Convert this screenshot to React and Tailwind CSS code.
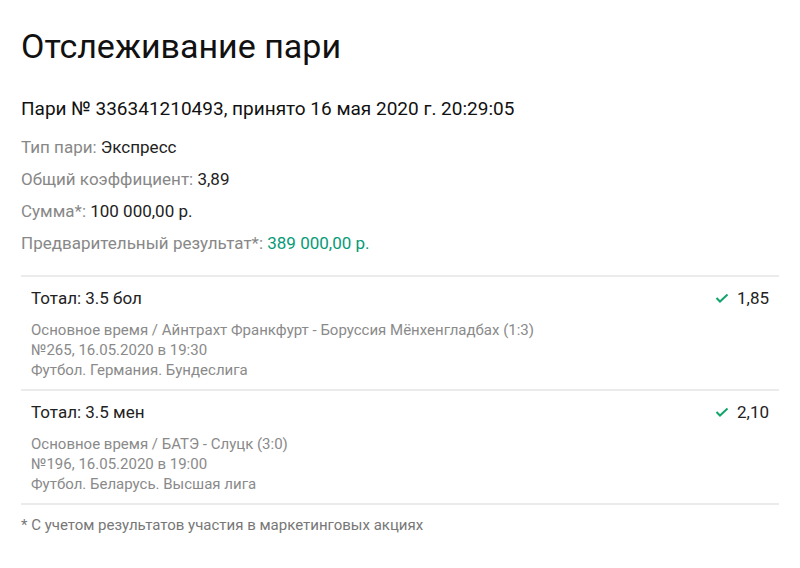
import React from 'react';

const bets = [
    {
        id: 1,
        name: 'Тотал: 3.5 бол',
        odds: '1,85',
        event: 'Основное время / Айнтрахт Франкфурт - Боруссия Мёнхенгладбах (1:3)',
        time: '№265, 16.05.2020 в 19:30',
        league: 'Футбол. Германия. Бундеслига',
    },
    {
        id: 2,
        name: 'Тотал: 3.5 мен',
        odds: '2,10',
        event: 'Основное время / БАТЭ - Слуцк (3:0)',
        time: '№196, 16.05.2020 в 19:00',
        league: 'Футбол. Беларусь. Высшая лига',
    },
];

function CheckIcon() {
    return (
        <svg width="14" height="10" viewBox="0 0 14 10" className="shrink-0">
            <polyline points="1.5,5 5,8.5 12.5,1.5" fill="none" stroke="#13a46c" strokeWidth="2" />
        </svg>
    );
}

function App() {
    return (
        <div className="bg-white min-h-[568px] px-[21px] text-[#222]" style={{ fontFamily: 'Roboto, "Liberation Sans", sans-serif' }}>
            <h1 className="pt-[26px] text-[34px] leading-[40px] font-normal text-[#111]">Отслеживание пари</h1>
            <p className="mt-[31px] text-[19px] leading-[24px] text-[#111]">
                Пари № 336341210493, принято 16 мая 2020 г. 20:29:05
            </p>
            <div className="mt-[10px] text-[17px] leading-[32px]">
                <p><span className="text-[#888]">Тип пари: </span>Экспресс</p>
                <p><span className="text-[#888]">Общий коэффициент: </span>3,89</p>
                <p><span className="text-[#888]">Сумма*: </span>100 000,00 р.</p>
                <p><span className="text-[#888]">Предварительный результат*: </span><span className="text-[#069a78]">389 000,00 р.</span></p>
            </div>
            <div className="mt-[16px] border-t-2 border-[#ebebeb]">
                {bets.map(bet => (
                    <div key={bet.id} className="px-[10px] pt-[9px] pb-[9px] border-b-2 border-[#ebebeb]">
                        <div className="flex justify-between items-center text-[17px] leading-[24px]">
                            <span>{bet.name}</span>
                            <span className="flex items-center gap-[8px]">
                                <CheckIcon />
                                {bet.odds}
                            </span>
                        </div>
                        <div className="mt-[10px] text-[15px] leading-[20px] text-[#8a8a8a]">
                            <p>{bet.event}</p>
                            <p>{bet.time}</p>
                            <p>{bet.league}</p>
                        </div>
                    </div>
                ))}
            </div>
            <p className="mt-[10px] text-[15px] leading-[20px] text-[#777]">* С учетом результатов участия в маркетинговых акциях</p>
        </div>
    );
}

export default App;
